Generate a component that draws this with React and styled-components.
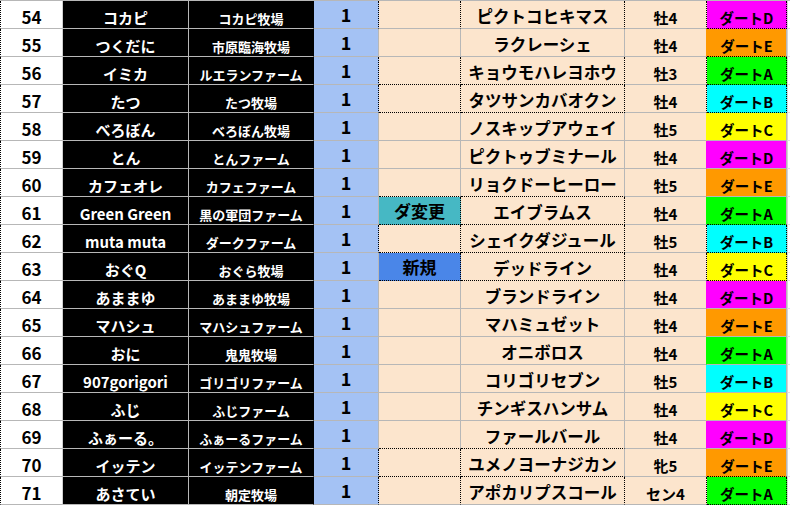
import React from "react";
import styled, { createGlobalStyle, css } from "styled-components";

const Global = createGlobalStyle`
  html, body { margin: 0; padding: 0; background: #ffffff; }
  body { font-family: "Noto Sans CJK JP", "Noto Sans", sans-serif; }
`;

const GRID = "#b7b7b7";
const DOT = "1px dotted #000";
const SOLID = `1px solid ${GRID}`;

const RACE = {
  A: "#00ff00",
  B: "#00ffff",
  C: "#ffff00",
  D: "#ff00ff",
  E: "#ff9900",
};

const STATUS = {
  "ダ変更": "#46b8c4",
  "新規": "#4a86e8",
};

const rows = [
  [54, "コカピ", "コカピ牧場", "", "ピクトコヒキマス", "牡4", "D"],
  [55, "つくだに", "市原臨海牧場", "", "ラクレーシェ", "牡4", "E"],
  [56, "イミカ", "ルエランファーム", "", "キョウモハレヨホウ", "牡3", "A"],
  [57, "たつ", "たつ牧場", "", "タツサンカバオクン", "牡4", "B"],
  [58, "べろぼん", "べろぼん牧場", "", "ノスキップアウェイ", "牡5", "C"],
  [59, "とん", "とんファーム", "", "ピクトゥブミナール", "牡4", "D"],
  [60, "カフェオレ", "カフェファーム", "", "リョクドーヒーロー", "牡5", "E"],
  [61, "Green Green", "黒の軍団ファーム", "ダ変更", "エイブラムス", "牡4", "A"],
  [62, "muta muta", "ダークファーム", "", "シェイクダジュール", "牡5", "B"],
  [63, "おぐQ", "おぐら牧場", "新規", "デッドライン", "牡4", "C"],
  [64, "あままゆ", "あままゆ牧場", "", "ブランドライン", "牡4", "D"],
  [65, "マハシュ", "マハシュファーム", "", "マハミュゼット", "牡4", "E"],
  [66, "おに", "鬼鬼牧場", "", "オニボロス", "牡4", "A"],
  [67, "907gorigori", "ゴリゴリファーム", "", "コリゴリセブン", "牡5", "B"],
  [68, "ふじ", "ふじファーム", "", "チンギスハンサム", "牡4", "C"],
  [69, "ふぁーる。", "ふぁーるファーム", "", "ファールバール", "牡4", "D"],
  [70, "イッテン", "イッテンファーム", "", "ユメノヨーナジカン", "牝5", "E"],
  [71, "あさてい", "朝定牧場", "", "アポカリプスコール", "セン4", "A"],
];

/* dotted-border map: vb = blue|status line, vs = status|horse line,
   vh = horse|sex line, pb = peach bottom, box = race cell boxed,
   rb = race bottom dotted */
const dots = {
  54: { vb: 1, vs: 1, vh: 1, box: 1 },
  55: { rb: 1 },
  56: { vb: 1, vs: 1, vh: 1, pb: 1, box: 1 },
  57: { vb: 1, vs: 1, vh: 1, pb: 1, box: 1 },
  60: { pb: 1 },
  61: { vs: 1, vh: 1, pb: 1, rb: 1 },
  62: { vb: 1, vs: 1, vh: 1, pb: 1, box: 1 },
  63: { vs: 1, vh: 1, pb: 1, box: 1 },
  69: { pb: 1 },
  70: { vb: 1, vs: 1, pb: 1, rb: 1 },
  71: { vb: 1, vs: 1, vh: 1, box: 1 },
};

const Sheet = styled.div`
  width: 790px;
  border-top: 1px solid ${GRID};
`;

const Row = styled.div`
  display: grid;
  grid-template-columns: 63px 126px 125px 65px 82px 164px 82px 80px 1fr;
  height: 28px;
  ${(p) =>
    p.$last &&
    css`
      & > * { border-bottom: 2px solid #217346; }
    `}
`;

const Cell = styled.div`
  box-sizing: border-box;
  display: flex;
  justify-content: center;
  align-items: center;
  white-space: nowrap;
  line-height: 1.2;
  font-weight: 700;
  padding-top: ${(p) => p.$pt || 0}px;
  border-bottom: ${(p) => (p.$bottom ? p.$bottom : SOLID)};
  border-right: ${(p) => (p.$right ? p.$right : SOLID)};
`;

const NumCell = styled(Cell).attrs({ $pt: 6 })`
  background: #ffffff;
  color: #000;
  font-size: 17px;
  border-left: ${DOT};
`;

const NameCell = styled(Cell).attrs({ $pt: 7 })`
  background: #000;
  color: #fff;
  font-size: 15px;
`;

const FarmCell = styled(Cell).attrs({ $pt: 9 })`
  background: #000;
  color: #fff;
  font-size: 13px;
`;

const CountCell = styled(Cell).attrs({ $pt: 1 })`
  background: #a4c2f4;
  color: #000;
  font-size: 18px;
`;

const StatusCell = styled(Cell).attrs({ $pt: 1 })`
  background: ${(p) => p.$bg || "#fce5cd"};
  color: #000;
  font-size: 17px;
`;

const HorseCell = styled(Cell).attrs({ $pt: 5 })`
  background: #fce5cd;
  color: #000;
  font-size: 16.5px;
`;

const SexCell = styled(Cell).attrs({ $pt: 7 })`
  background: #fce5cd;
  color: #000;
  font-size: 15px;
`;

const RaceCell = styled(Cell).attrs({ $pt: 6 })`
  background: ${(p) => p.$bg};
  color: #000;
  font-size: 14.5px;
`;

const Filler = styled(Cell)`
  background: #ffffff;
  border-right: none;
  border-left: 1px solid #d4d4d4;
  border-bottom: 1px solid #e2e2e2;
`;

export default function App() {
  return (
    <>
      <Global />
      <Sheet>
        {rows.map(([n, name, farm, status, horse, sex, race], i) => {
          const d = dots[n] || {};
          const last = i === rows.length - 1;
          const pb = d.pb ? DOT : undefined;
          const rb = d.box || d.rb ? DOT : undefined;
          return (
            <Row key={n} $last={last}>
              <NumCell $right="1px solid #d0d0d0">{n}</NumCell>
              <NameCell>{name}</NameCell>
              <FarmCell $right="1px solid #000">{farm}</FarmCell>
              <CountCell $right={d.vb ? DOT : undefined}>1</CountCell>
              <StatusCell
                $bg={STATUS[status]}
                $right={d.vs ? DOT : undefined}
                $bottom={pb}
              >
                {status}
              </StatusCell>
              <HorseCell $right={d.vh ? DOT : undefined} $bottom={pb}>
                {horse}
              </HorseCell>
              <SexCell $right={d.box ? DOT : `1px solid ${RACE[race]}`}>
                {sex}
              </SexCell>
              <RaceCell
                $bg={RACE[race]}
                $right={d.box ? DOT : SOLID}
                $bottom={rb}
              >
                {"ダート" + race}
              </RaceCell>
              <Filler />
            </Row>
          );
        })}
      </Sheet>
    </>
  );
}
